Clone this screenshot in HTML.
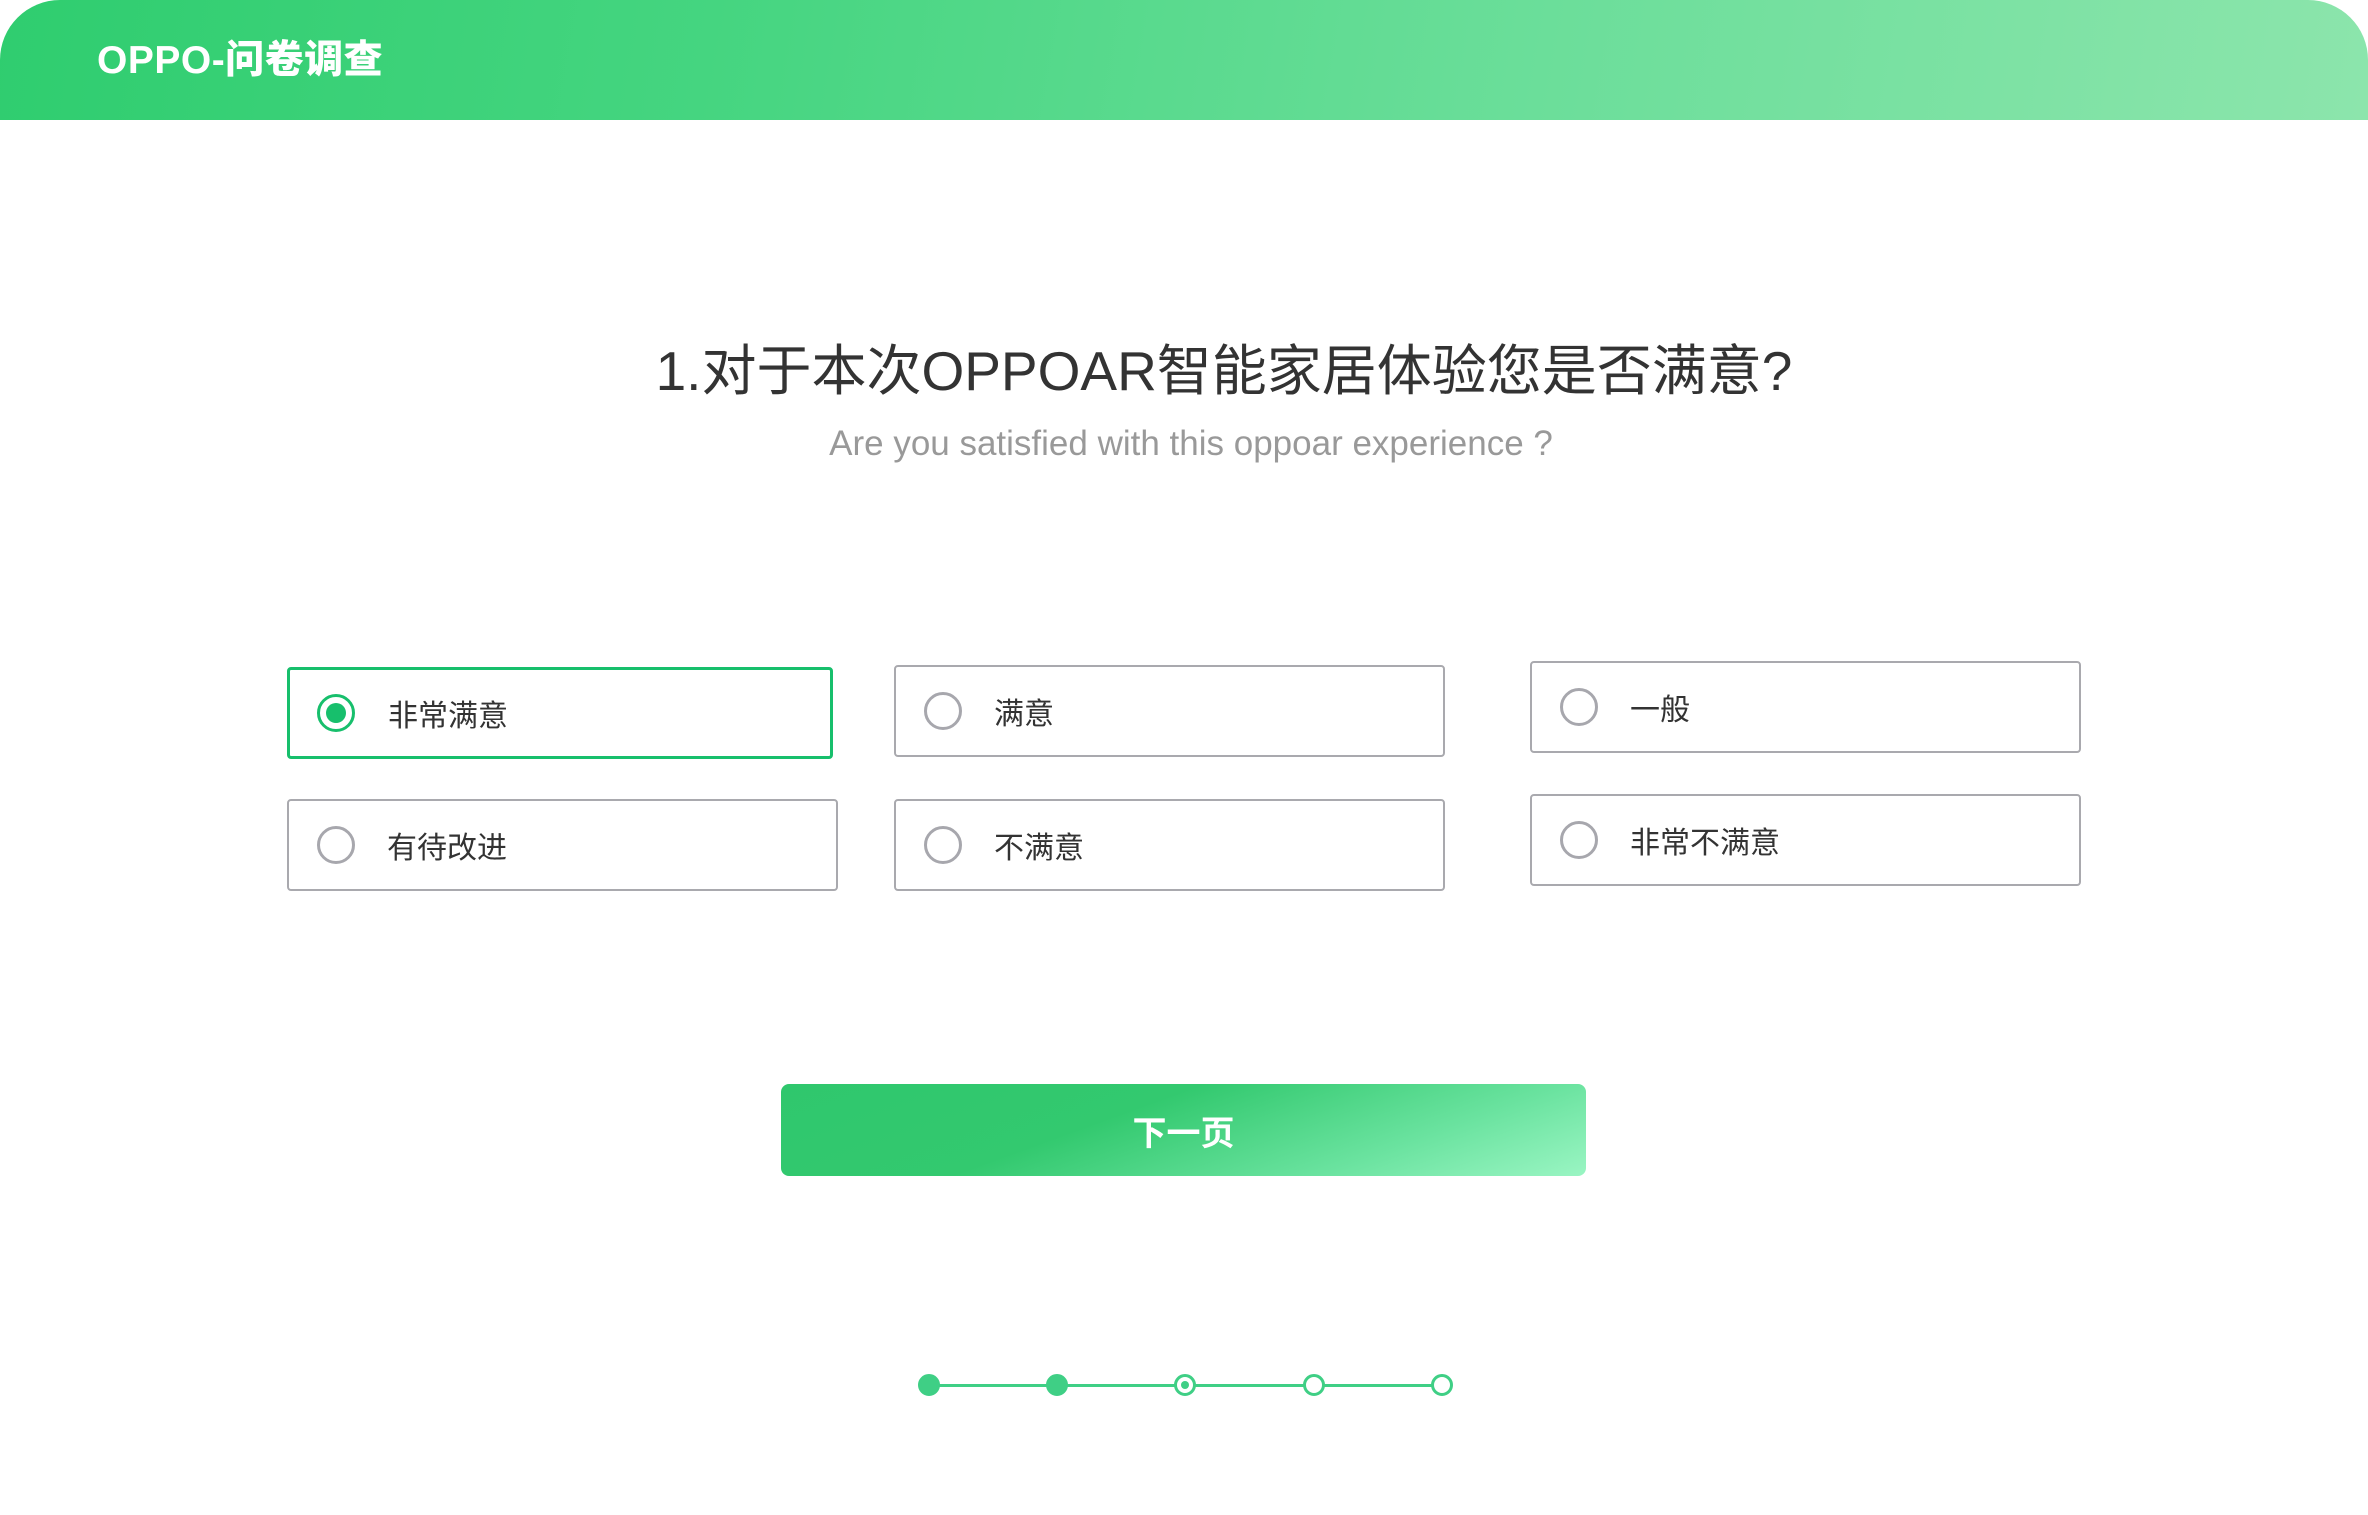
<!DOCTYPE html>
<html><head><meta charset="utf-8"><style>
body{margin:0;width:2368px;height:1515px;background:#fff;position:relative;overflow:hidden;font-family:"Liberation Sans","Noto Sans CJK SC",sans-serif}
.hdr{position:absolute;left:0;top:0;width:2368px;height:120px;border-radius:60px 60px 0 0;background:linear-gradient(100deg,#2fcd6f 0%,#45d580 30%,#6bde9a 65%,#8ce5ac 100%)}
.hdr span{position:absolute;left:97px;top:36px;color:#fff;font-size:39px;font-weight:900;line-height:50px;letter-spacing:0.5px}
.q{position:absolute;left:0;width:2368px;text-align:center}
.opt{position:absolute;box-sizing:border-box;border:2px solid #a9a9ae;border-radius:4px;background:#fff}
.opt.sel{border:3px solid #17bf6c}
.opt i{position:absolute;left:28px;top:50%;margin-top:-19px;width:38px;height:38px;box-sizing:border-box;border:3px solid #a7a7ad;border-radius:50%}
.opt.sel i{border-color:#17bf6c;left:27px}
.opt.sel i:after{content:"";position:absolute;left:6px;top:6px;width:20px;height:20px;border-radius:50%;background:#17bf6c}
.opt span{position:absolute;left:98px;top:50%;transform:translateY(-50%);margin-top:4px;font-size:30px;color:#333;line-height:40px}
.btn{position:absolute;left:781px;top:1084px;width:805px;height:92px;border-radius:8px;background:linear-gradient(160deg,#2fc76d 0%,#33c96f 40%,#6be3a0 75%,#9af5c3 100%);color:#fff;font-size:34px;font-weight:bold;text-align:center;line-height:100px}
.line{position:absolute;left:929px;top:1384px;width:513px;height:3px;background:#3fcf85}
.dot{position:absolute;top:1374px;width:22px;height:22px;box-sizing:border-box;border-radius:50%;border:3px solid #3fcf85;background:#fff}
.dot.f{background:#3fcf85}
.dot.h:after{content:"";position:absolute;left:4px;top:4px;width:8px;height:8px;border-radius:50%;background:#3fcf85}
</style></head><body>
<div class="hdr"><span>OPPO-问卷调查</span></div>
<div class="q" style="top:338px;font-size:55px;color:#333;line-height:66px;padding-left:80px;box-sizing:border-box">1.对于本次OPPOAR智能家居体验您是否满意?</div>
<div class="q" style="top:422px;font-size:35px;color:#999;line-height:44px;padding-left:14px;box-sizing:border-box">Are you satisfied with this oppoar experience ?</div>
<div class="opt sel" style="left:287px;top:667px;width:546px;height:92px"><i></i><span>非常满意</span></div>
<div class="opt" style="left:894px;top:665px;width:551px;height:92px"><i></i><span>满意</span></div>
<div class="opt" style="left:1530px;top:661px;width:551px;height:92px"><i></i><span>一般</span></div>
<div class="opt" style="left:287px;top:799px;width:551px;height:92px"><i></i><span>有待改进</span></div>
<div class="opt" style="left:894px;top:799px;width:551px;height:92px"><i></i><span>不满意</span></div>
<div class="opt" style="left:1530px;top:794px;width:551px;height:92px"><i></i><span>非常不满意</span></div>
<div class="btn">下一页</div>
<div class="line"></div>
<div class="dot f" style="left:918px"></div>
<div class="dot f" style="left:1046px"></div>
<div class="dot h" style="left:1174px"></div>
<div class="dot" style="left:1303px"></div>
<div class="dot" style="left:1431px"></div>
</body></html>
